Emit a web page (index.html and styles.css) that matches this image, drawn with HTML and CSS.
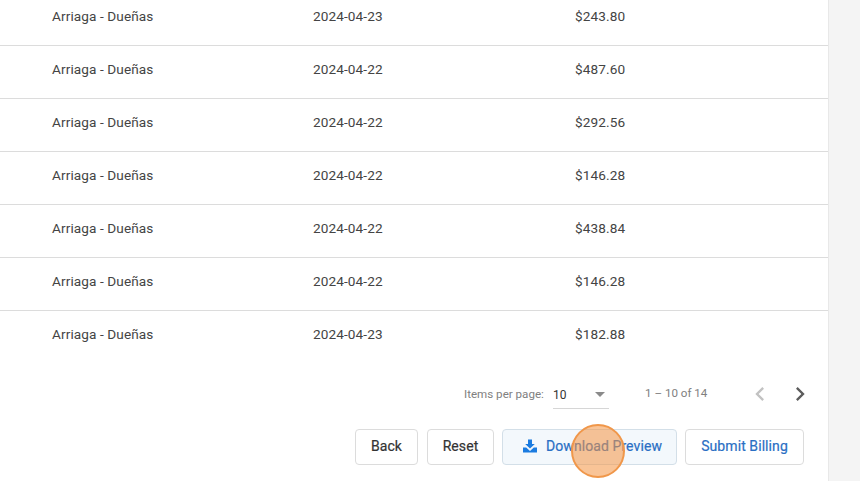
FILE: index.html
```html
<!DOCTYPE html>
<html lang="en">
<head>
<meta charset="utf-8">
<title>Billing preview</title>
<link rel="stylesheet" href="styles.css">
</head>
<body>
<div class="page">
  <main class="panel">
    <div class="table">
      <div class="row"><span>Arriaga - Dueñas</span><span>2024-04-23</span><span>$243.80</span></div>
      <div class="row"><span>Arriaga - Dueñas</span><span>2024-04-22</span><span>$487.60</span></div>
      <div class="row"><span>Arriaga - Dueñas</span><span>2024-04-22</span><span>$292.56</span></div>
      <div class="row"><span>Arriaga - Dueñas</span><span>2024-04-22</span><span>$146.28</span></div>
      <div class="row"><span>Arriaga - Dueñas</span><span>2024-04-22</span><span>$438.84</span></div>
      <div class="row"><span>Arriaga - Dueñas</span><span>2024-04-22</span><span>$146.28</span></div>
      <div class="row row-last"><span>Arriaga - Dueñas</span><span>2024-04-23</span><span>$182.88</span></div>
    </div>
    <div class="paginator">
      <span class="per-page-label">Items per page:</span>
      <div class="select"><span>10</span><i class="caret"></i></div>
      <span class="range">1 – 10 of 14</span>
      <svg class="chev chev-prev" viewBox="0 0 24 24" width="28" height="28"><path d="M15.41 7.41 14 6l-6 6 6 6 1.41-1.41L10.83 12z"/></svg>
      <svg class="chev chev-next" viewBox="0 0 24 24" width="28" height="28"><path d="M10 6 8.59 7.41 13.17 12l-4.58 4.59L10 18l6-6z"/></svg>
    </div>
    <div class="actions">
      <button class="btn btn-back">Back</button>
      <button class="btn btn-reset">Reset</button>
      <button class="btn btn-download">
        <svg viewBox="0 0 16 16" width="16" height="16"><path d="M6 1.500h4v4.600h2.800L8 10.600 3.200 6.100H6z"/><path d="M1 9.500h3.200L8 13l3.800-3.500H15v5H1z"/></svg>
        <span>Download Preview</span>
      </button>
      <button class="btn btn-submit">Submit Billing</button>
    </div>
  </main>
  <aside class="side"></aside>
</div>
<div class="click-marker"></div>
</body>
</html>
```
FILE: styles.css
```css
* { box-sizing: border-box; }
html, body { margin: 0; height: 100%; overflow: hidden; background: #f5f5f5; }
body { font-family: Roboto, "Liberation Sans", sans-serif; color: #444; }
.page { display: flex; height: 481px; overflow: hidden; }
.panel { width: 828px; flex: none; background: #fff; margin-top: -7px; }
.side { flex: 1; background: #f4f4f4; border-left: 1px solid #e8e8e8; }
.row {
  display: grid;
  grid-template-columns: 261px 262px 1fr;
  align-items: center;
  height: 53px;
  padding-left: 52px;
  padding-bottom: 7px;
  border-bottom: 1px solid #dcdcdc;
  font-size: 13.6px;
  letter-spacing: 0.1px;
  line-height: 20px;
}
.row-last { border-bottom: 0; }
.paginator {
  display: flex;
  align-items: center;
  height: 40px;
  margin-top: 10px;
  padding-left: 464px;
  font-size: 11.6px;
  color: #808080;
}
.per-page-label { width: 89px; }
.select {
  display: flex;
  align-items: center;
  justify-content: space-between;
  width: 56px;
  height: 28px;
  padding-right: 4px;
  margin-top: 2px;
  border-bottom: 1px solid #d6d6d6;
  font-size: 12px;
  color: #333;
}
.caret {
  width: 0;
  height: 0;
  border-left: 5px solid transparent;
  border-right: 5px solid transparent;
  border-top: 5px solid #8a8a8a;
}
.range { margin-left: 36px; width: 101px; margin-top: -2px; }
.chev { flex: none; }
.chev-prev { fill: #c2c2c2; }
.chev-next { fill: #5c5c5c; margin-left: 12px; }
.actions {
  display: flex;
  justify-content: flex-end;
  gap: 8px;
  margin-top: 15px;
  padding-right: 24px;
}
.btn {
  display: flex;
  align-items: center;
  justify-content: center;
  height: 36px;
  padding: 0 0 2px;
  background: #fff;
  border: 1px solid #dcdcdc;
  border-radius: 4px;
  font: 400 14px/20px Roboto, "Liberation Sans", sans-serif;
  letter-spacing: 0.08px;
  -webkit-text-stroke: 0.2px currentColor;
  color: #333;
}
.btn-back { width: 63px; margin-right: 1px; }
.btn-reset { width: 67px; }
.btn-download {
  width: 175px;
  gap: 8px;
  padding-left: 5px;
  background: #f3f8fc;
  border-color: #d3dfe8;
  color: #2a6fc4;
}
.btn-download svg { fill: #1a7be0; flex: none; }
.btn-submit { width: 119px; color: #2a6fc4; }
.click-marker {
  position: absolute;
  left: 571px;
  top: 424px;
  width: 54px;
  height: 54px;
  border-radius: 50%;
  background: rgba(244, 147, 66, 0.55);
  border: 2px solid #f0974a;
}
```
